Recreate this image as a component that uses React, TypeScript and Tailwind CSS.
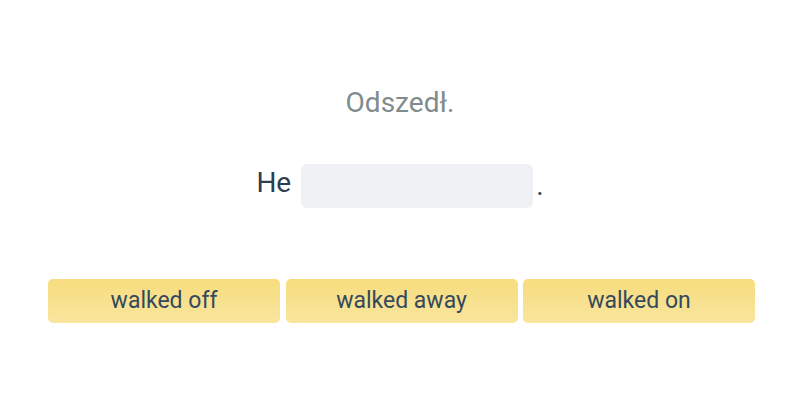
import React from 'react';

const options = ['walked off', 'walked away', 'walked on'];

export default function App() {
  return (
    <div className="w-[800px] h-[400px] bg-white font-['Roboto',sans-serif] flex flex-col">
      {/* Prompt */}
      <div className="mt-[84px] text-center text-[28px] leading-[38px] text-[#7f8c8d]">Odszedł.</div>

      {/* Sentence with blank */}
      <div className="mt-[42px] flex items-center justify-center">
        <span className="text-[28px] leading-[36px] text-[#2c3e50] mr-[10px] -mt-[6px]">He</span>
        <div className="w-[232px] h-[44px] rounded-[6px] bg-[#eff1f5]" />
        <span className="text-[28px] leading-[36px] text-[#2c3e50] ml-[3px]">.</span>
      </div>

      {/* Choices */}
      <div className="mt-[71px] ml-[48px] grid grid-cols-[232px_232px_232px] gap-[5.5px]">
        {options.map((o) => (
          <button
            key={o}
            className="h-[44px] rounded-[5px] bg-gradient-to-b from-[#f7dd7e] to-[#f9e59d] text-[23px] text-[#34495e]"
          >
            {o}
          </button>
        ))}
      </div>
    </div>
  );
}
